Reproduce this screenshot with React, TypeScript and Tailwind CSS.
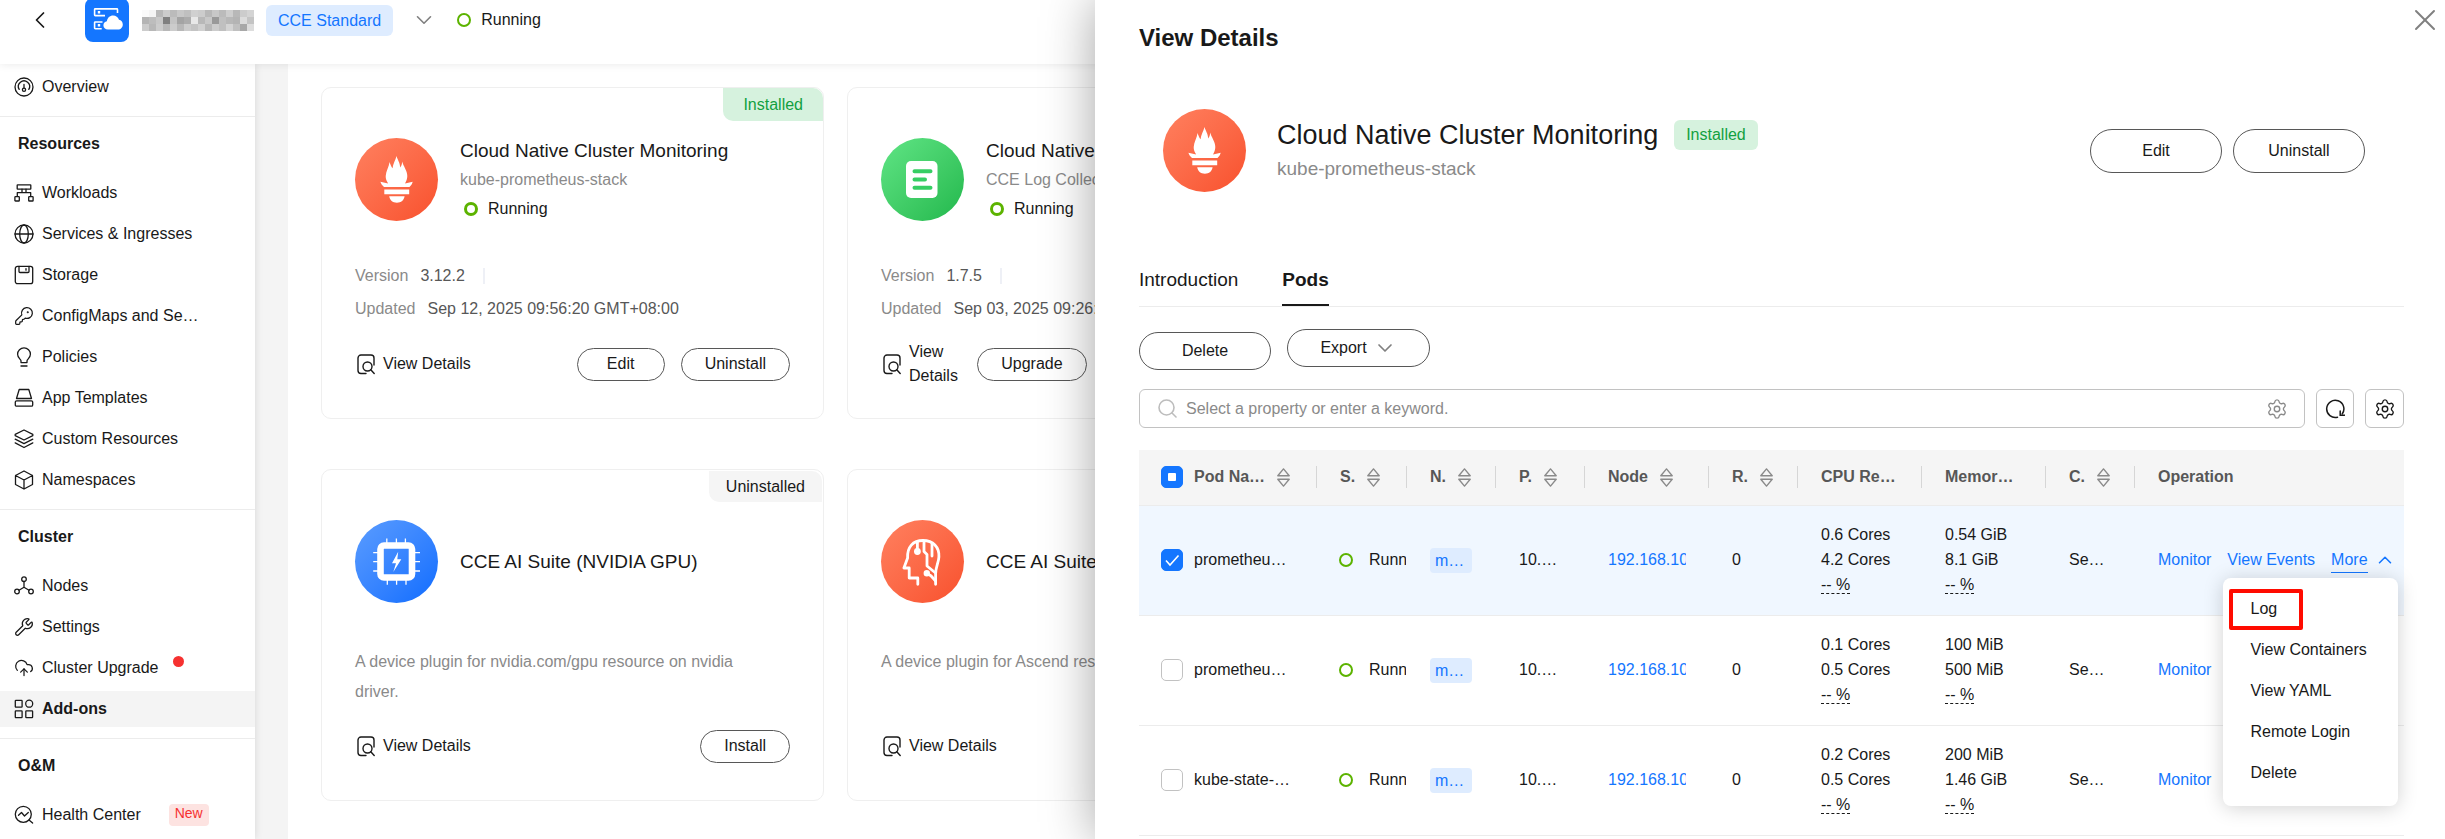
import React, { useState } from "react";
import {
  ChevronDown,
  ChevronLeft,
  ChevronUp,
  CloudUpload,
  KeyRound,
  Settings,
  Wrench,
  X,
} from "lucide-react";

interface Addon {
  name: string;
  subtitle?: string;
  description?: string;
  version?: string;
  updated?: string;
  installed: boolean;
  actions: string[];
  icon: React.ReactNode;
}

interface Pod {
  id: string;
  name: string;
  cpu: string[];
  memory: string[];
}

/* ---------- Sidebar icons ---------- */

const LineIcon: React.FC<{ children: React.ReactNode }> = ({ children }) => (
  <svg
    className="w-5 h-5 flex-shrink-0"
    viewBox="0 0 20 20"
    fill="none"
    stroke="currentColor"
    strokeWidth="1.3"
    strokeLinecap="round"
    strokeLinejoin="round">
    {children}
  </svg>
);

const OverviewIcon = () => (
  <LineIcon>
    <circle cx="10" cy="10" r="9" />
    <path d="M5.2 12.4a5.6 5.6 0 1 1 9.6 0M10 7.5v3.6" />
    <circle cx="10" cy="12.8" r="1.6" />
  </LineIcon>
);

const WorkloadsIcon = () => (
  <LineIcon>
    <rect x="3.2" y="1.8" width="13.6" height="4.4" rx="0.4" />
    <path d="M8 6.200v3.500M12 6.200v3.500M3.300 13.400V9.700h13.400v3.700" />
    <rect x="0.9" y="13.6" width="4.4" height="4.4" rx="0.6" />
    <rect x="14.7" y="13.6" width="4.4" height="4.4" rx="0.6" />
  </LineIcon>
);

const GlobeIcon = () => (
  <LineIcon>
    <circle cx="10" cy="10" r="9" />
    <ellipse cx="10" cy="10" rx="4.3" ry="9" />
    <path d="M1 10h18" />
  </LineIcon>
);

const StorageIcon = () => (
  <LineIcon>
    <rect x="1.3" y="1.3" width="17.4" height="17.4" rx="2.2" />
    <path d="M5 1.5v5a1 1 0 0 0 1 1h8a1 1 0 0 0 1-1v-5M12 3.6v1.6" />
  </LineIcon>
);

const BulbIcon = () => (
  <LineIcon>
    <path d="M7 15.600v-1.800C6.800 12 3.600 11 3.600 7.200a6.400 6.400 0 0 1 12.800 0c0 3.800-3.200 4.800-3.400 6.600v1.800zM7 19h6" />
  </LineIcon>
);

const TemplatesIcon = () => (
  <LineIcon>
    <path d="M5.200 1.500h9.600l2.700 9H2.500z" />
    <rect x="1.3" y="12.8" width="17.4" height="5.4" rx="1.3" />
  </LineIcon>
);

const LayersIcon = () => (
  <LineIcon>
    <path d="M10 1l8.800 4.300v1.400L10 11 1.200 6.700V5.300zM1.200 10.200L10 14.700l8.800-4.500M1.200 13.900L10 18.500l8.800-4.600" />
  </LineIcon>
);

const CubeIcon = () => (
  <LineIcon>
    <path d="M10 1l8.500 4.500v9L10 19l-8.500-4.500v-9zM1.500 5.500L10 10l8.500-4.500M10 10v9" />
  </LineIcon>
);

const NodesIcon = () => (
  <LineIcon>
    <circle cx="10" cy="3.2" r="2.3" />
    <circle cx="3" cy="15.5" r="2.3" />
    <circle cx="17" cy="15.5" r="2.3" />
    <path d="M10 5.500v5.500M5 14.200l5-3 5 3" />
  </LineIcon>
);

const AddonsIcon = () => (
  <LineIcon>
    <rect x="1.3" y="1.3" width="6.8" height="6.8" rx="0.6" />
    <circle cx="15.2" cy="4.7" r="3.5" />
    <rect x="1.3" y="11.8" width="6.8" height="6.8" rx="0.6" />
    <rect x="11.8" y="11.8" width="6.8" height="6.8" rx="0.6" />
  </LineIcon>
);

const HealthIcon = () => (
  <LineIcon>
    <circle cx="9.3" cy="9.3" r="8" />
    <path d="M15 15l3.600 3M4.500 10.300l3-2.800 3 3.500 3.800-3.500" />
  </LineIcon>
);

const DetailsIcon = () => (
  <svg
    className="w-[18px] h-[21px] flex-shrink-0"
    viewBox="0 0 18 21"
    fill="none"
    stroke="currentColor"
    strokeWidth="1.4"
    strokeLinecap="round">
    <path d="M17 11V4a3 3 0 0 0-3-3H4a3 3 0 0 0-3 3v12.500a3 3 0 0 0 3 3h5" />
    <circle cx="10.5" cy="12.5" r="4.5" />
    <path d="M13.800 15.800l3.400 3.700" />
  </svg>
);

const SearchIcon = () => (
  <svg
    className="w-[19px] h-[19px] flex-shrink-0 text-[#bdbdbd]"
    viewBox="0 0 19 19"
    fill="none"
    stroke="currentColor"
    strokeWidth="1.6"
    strokeLinecap="round">
    <circle cx="8.5" cy="8.5" r="7.5" />
    <path d="M14 14l4 4" />
  </svg>
);

const RefreshIcon = () => (
  <svg
    className="w-5 h-5"
    viewBox="0 0 20 20"
    fill="none"
    stroke="currentColor"
    strokeWidth="1.5"
    strokeLinecap="round">
    <path d="M12.500 18.200A8.600 8.600 0 1 1 17.200 15" />
    <path d="M15.200 12v4.200h4.300" />
  </svg>
);

const SortIcon = () => (
  <svg
    className="w-[13px] h-[19px] flex-shrink-0 text-[#8a8a8a]"
    viewBox="0 0 13 19"
    fill="none"
    stroke="currentColor"
    strokeWidth="1.4"
    strokeLinejoin="round">
    <path d="M6.500 0.900l5.700 6.900H0.800zM6.500 18.100l5.700-6.900H0.800z" />
  </svg>
);

/* ---------- Add-on logos ---------- */

const TorchLogo = () => (
  <div className="w-[83px] h-[83px] flex-shrink-0 rounded-full overflow-hidden bg-linear-to-br from-[#ff805f] to-[#f8502c]">
    <svg viewBox="0 0 83 83" fill="#fff">
      <path d="M41.500 18c.8 3.500 3.500 6.500 3.700 11.500 1.200-1.500 1.800-3.500 2.100-6 .8 4.500 5 9 5 14.500 0 3-1 5.200-2.300 7.500l7.700-1.800c-.6 2.200-1.600 3.800-3.200 5.200H29c-1.700-1.400-2.900-3-3.600-5.200l7.800 1.800c-1.500-2.300-2.700-4.500-2.500-7.500.2-5 3.300-9 3.900-14 .7 2.300 1.500 4.500 3 6.300.1-4.300 3.100-8.300 3.900-12.300z" />
      <path d="M29.300 51.500h24.900v4.800H29.300zM34.200 58.300h15.400c-.5 3.800-3.500 6.400-7.700 6.400s-7.200-2.600-7.700-6.400z" />
    </svg>
  </div>
);

const LogLogo = () => (
  <div className="w-[83px] h-[83px] flex-shrink-0 rounded-full overflow-hidden bg-linear-to-br from-[#5fe585] to-[#1fb84c]">
    <svg viewBox="0 0 83 83">
      <rect x="25" y="23" width="31.5" height="37" rx="5" fill="#fff" />
      <path
        d="M33.500 33.200h16M33.500 41.500H44M33.500 49.700h16"
        stroke="#36ce63"
        strokeWidth="4"
        strokeLinecap="round"
      />
    </svg>
  </div>
);

const GpuLogo = () => (
  <div className="w-[83px] h-[83px] flex-shrink-0 rounded-full overflow-hidden bg-linear-to-br from-[#5a9cff] to-[#0a6cff]">
    <svg viewBox="0 0 83 83" fill="none">
      <rect x="25.5" y="25.5" width="31.5" height="32" rx="3.5" stroke="#fff" strokeWidth="6.6" />
      <path
        d="M31.800 18.500v5M41.400 18.500v5M50.400 18.500v5M32.300 60v4.700M41.600 60v4.700M51 60v4.700M18.200 32.700H23M18.200 41.700H23M18.200 51H23M60 32.700h5M60 41.700h5M60 51h5"
        stroke="#fff"
        strokeWidth="1.3"
      />
      <path d="M43.200 31.800L37 43.200h4L38.300 52 46.300 39.300h-4z" fill="#fff" />
    </svg>
  </div>
);

const AscendLogo = () => (
  <div className="w-[83px] h-[83px] flex-shrink-0 rounded-full overflow-hidden bg-linear-to-br from-[#ff805f] to-[#f8502c]">
    <svg
      viewBox="0 0 83 83"
      fill="none"
      stroke="#fff"
      strokeWidth="2.8"
      strokeLinecap="round"
      strokeLinejoin="round">
      <path d="M36.800 64.300V58h-8.600V48h-5.300l3.700-10C26 27 32 20.500 42 20.500S58.500 27 57.900 37c-.3 6-3.300 10-3.300 17v10.300" />
      <path d="M36.400 30V22.500M43 21.500v10l3 3v11.500l8.600 7M51 23.500V36M45.400 53.300l4.500 2.500 4.500 5" />
      <circle cx="36.4" cy="31.5" r="2" fill="#fff" />
      <circle cx="45.8" cy="53.3" r="1.8" fill="#fff" />
    </svg>
  </div>
);

const ProductLogo = () => (
  <div className="w-11 h-11 flex-shrink-0 rounded-lg bg-[#1476ff]">
    <svg viewBox="0 0 44 44" fill="none">
      <path
        d="M32.500 15v-3.500a.6.600 0 0 0-.6-.6H10.200a.6.600 0 0 0-.6.600V17a.6.600 0 0 0 .6.600H20M17.500 24h-7.300a.6.600 0 0 0-.6.600v5.500a.6.600 0 0 0 .6.600h6.500"
        stroke="#fff"
        strokeWidth="1.6"
      />
      <path d="M12.800 14.300h2.400M12.800 27.300h2.400" stroke="#fff" strokeWidth="2.4" />
      <path
        d="M23 31.400c-2.800 0-4.600-1.800-4.600-4.200 0-2.200 1.600-3.700 3.500-3.900.4-3.400 2.900-5.800 6.200-5.800 2.800 0 5 1.600 5.900 4.300 2.200.3 3.800 2.200 3.800 4.600 0 2.900-2 5-4.800 5z"
        fill="#fff"
      />
    </svg>
  </div>
);

/* Obscured cluster name, one grey level per 7px block */
const NAME_BLOCKS = [
  ["#fafafa", "#f4f4f4", "#b8b8b8", "#cccccc", "#bbbbbb", "#c8c8c8", "#c0c0c0", "#d0d0d0", "#cccccc", "#b8b8b8", "#c8c8c8", "#bbbbbb", "#cecece", "#b8b8b8", "#cccccc", "#d4d4d4"],
  ["#b4b4b4", "#bdbdbd", "#c8c8c8", "#808080", "#c4c4c4", "#a4a4a4", "#acacac", "#e8e8e8", "#b8b8b8", "#c8c8c8", "#999999", "#c0c0c0", "#b8b8b8", "#b4b4b4", "#dcdcdc", "#c4c4c4"],
  ["#cccccc", "#b8b8b8", "#cccccc", "#b8b8b8", "#cccccc", "#b8b8b8", "#cccccc", "#c4c4c4", "#d0d0d0", "#b8b8b8", "#cccccc", "#c0c0c0", "#d4d4d4", "#c0c0c0", "#a8a8a8", "#dddddd"],
];

const ObscuredName = () => (
  <svg className="w-28 h-[21px] flex-shrink-0" viewBox="0 0 112 21" shapeRendering="crispEdges">
    {NAME_BLOCKS.map((row, y) =>
      row.map((fill, x) => (
        <rect key={`${x}-${y}`} x={x * 7} y={y * 7} width="7" height="7" fill={fill} />
      ))
    )}
  </svg>
);

/* ---------- Data ---------- */

const menuSections = [
  {
    title: "Resources",
    items: [
      { label: "Workloads", icon: <WorkloadsIcon /> },
      { label: "Services & Ingresses", icon: <GlobeIcon /> },
      { label: "Storage", icon: <StorageIcon /> },
      { label: "ConfigMaps and Se…", icon: <KeyRound size={20} strokeWidth={1.5} /> },
      { label: "Policies", icon: <BulbIcon /> },
      { label: "App Templates", icon: <TemplatesIcon /> },
      { label: "Custom Resources", icon: <LayersIcon /> },
      { label: "Namespaces", icon: <CubeIcon /> },
    ],
  },
  {
    title: "Cluster",
    items: [
      { label: "Nodes", icon: <NodesIcon /> },
      { label: "Settings", icon: <Wrench size={20} strokeWidth={1.5} /> },
      { label: "Cluster Upgrade", icon: <CloudUpload size={20} strokeWidth={1.5} />, dot: true },
      { label: "Add-ons", icon: <AddonsIcon />, active: true },
    ],
  },
  {
    title: "O&M",
    items: [{ label: "Health Center", icon: <HealthIcon />, tag: "New" }],
  },
];

const addons: Addon[][] = [
  [
    {
      name: "Cloud Native Cluster Monitoring",
      subtitle: "kube-prometheus-stack",
      version: "3.12.2",
      updated: "Sep 12, 2025 09:56:20 GMT+08:00",
      installed: true,
      actions: ["Edit", "Uninstall"],
      icon: <TorchLogo />,
    },
    {
      name: "Cloud Native Log Collection",
      subtitle: "CCE Log Collector",
      version: "1.7.5",
      updated: "Sep 03, 2025 09:26:20 GMT+08:00",
      installed: true,
      actions: ["Upgrade", "Edit", "Uninstall"],
      icon: <LogLogo />,
    },
  ],
  [
    {
      name: "CCE AI Suite (NVIDIA GPU)",
      description: "A device plugin for nvidia.com/gpu resource on nvidia driver.",
      installed: false,
      actions: ["Install"],
      icon: <GpuLogo />,
    },
    {
      name: "CCE AI Suite (Ascend NPU)",
      description: "A device plugin for Ascend resource",
      installed: false,
      actions: ["Install"],
      icon: <AscendLogo />,
    },
  ],
];

const pods: Pod[] = [
  { id: "pod-1", name: "prometheu…", cpu: ["0.6 Cores", "4.2 Cores"], memory: ["0.54 GiB", "8.1 GiB"] },
  { id: "pod-2", name: "prometheu…", cpu: ["0.1 Cores", "0.5 Cores"], memory: ["100 MiB", "500 MiB"] },
  { id: "pod-3", name: "kube-state-…", cpu: ["0.2 Cores", "0.5 Cores"], memory: ["200 MiB", "1.46 GiB"] },
];

const columns = [
  { label: "S.", sortable: true },
  { label: "N.", sortable: true },
  { label: "P.", sortable: true },
  { label: "Node", sortable: true },
  { label: "R.", sortable: true },
  { label: "CPU Re…", sortable: false },
  { label: "Memor…", sortable: false },
  { label: "C.", sortable: true },
  { label: "Operation", sortable: false },
];

/* ---------- Page pieces ---------- */

const TopBar = () => (
  <header className="relative z-10 h-16 flex-shrink-0 bg-white shadow-[0_1px_8px_rgba(0,0,0,0.08)]">
    <div className="flex items-center h-10 pl-[26px]">
      <button aria-label="Back" className="mr-[31px]">
        <ChevronLeft size={28} strokeWidth={1.5} />
      </button>
      <ProductLogo />
      <div className="flex items-center gap-3 ml-[13px]">
        <ObscuredName />
        <span className="h-[31px] px-3 leading-[31px] rounded-md bg-[#deecff] text-[#1476ff]">
          CCE Standard
        </span>
      </div>
      <button aria-label="Switch cluster" className="ml-[18px] text-[#808080]">
        <ChevronDown size={26} strokeWidth={1.5} />
      </button>
      <span className="w-3.5 h-3.5 ml-5 mr-2.5 rounded-full border-2 border-[#5cb300]" />
      <span>Running</span>
    </div>
  </header>
);

const MenuItem: React.FC<{
  label: string;
  icon: React.ReactNode;
  active?: boolean;
  dot?: boolean;
  tag?: string;
}> = ({ label, icon, active, dot, tag }) => (
  <a
    href="#"
    className={`flex items-center gap-2 h-9 pl-3.5 whitespace-nowrap ${
      active ? "bg-[#f4f4f4] font-bold" : ""
    }`}>
    {icon}
    <span>{label}</span>
    {dot && <span className="w-[11px] h-[11px] ml-1.5 mb-[14px] rounded-full bg-[#f63130]" />}
    {tag && (
      <span className="h-[22px] ml-5 px-1.5 rounded-sm bg-[#fde3e1] text-sm leading-[18px] text-[#f63130]">
        {tag}
      </span>
    )}
  </a>
);

const Sidebar = () => (
  <nav className="w-[255px] flex-shrink-0 bg-white shadow-[0_0_8px_rgba(0,0,0,0.12)]">
    <div className="pt-[5px] pb-[11px]">
      <MenuItem label="Overview" icon={<OverviewIcon />} />
    </div>
    {menuSections.map((section) => (
      <section key={section.title} className="border-t border-[#ececec] pt-[9px] pb-[11px]">
        <h3 className="h-9 pl-[18px] leading-9 font-bold">{section.title}</h3>
        <div className="flex flex-col gap-[5px] mt-[13px]">
          {section.items.map((item) => (
            <MenuItem key={item.label} {...item} />
          ))}
        </div>
      </section>
    ))}
  </nav>
);

const AddonCard: React.FC<{ addon: Addon }> = ({ addon }) => (
  <article className="relative pt-12 px-[33px] pb-[30px] rounded-[10px] border border-[#efefef] bg-white">
    {addon.installed ? (
      <span className="absolute top-0 right-0 h-[33px] px-5 leading-[33px] rounded-tr-[10px] rounded-bl-[10px] bg-[#d6f2de] text-[#12a03f]">
        Installed
      </span>
    ) : (
      <span className="absolute top-px right-px h-[31px] px-[17px] leading-[31px] rounded-tr-[10px] rounded-bl-[10px] bg-[#f5f5f5]">
        Uninstalled
      </span>
    )}

    <div className="flex items-center gap-[22px] h-[87px]">
      {addon.icon}
      <div className="leading-[29px] whitespace-nowrap">
        <h2 className="text-[19px] leading-[29px]">{addon.name}</h2>
        {addon.subtitle && (
          <>
            <p className="text-[#8a8a8a]">{addon.subtitle}</p>
            <p className="flex items-center gap-2.5 pl-1">
              <span className="w-3.5 h-3.5 rounded-full border-3 border-[#5cb300]" />
              Running
            </p>
          </>
        )}
      </div>
    </div>

    {addon.description ? (
      <p className="min-h-[117px] pt-[42px] pr-5 leading-[30px] text-[#8a8a8a]">
        {addon.description}
      </p>
    ) : (
      <dl className="min-h-[117px] pt-9 leading-[33px] text-[#575757] whitespace-nowrap">
        <div className="flex items-center gap-3">
          <dt className="text-[#8a8a8a]">Version</dt>
          <dd>{addon.version}</dd>
          <span className="w-0.5 h-4 ml-1.5 bg-[#eef0f6]" />
        </div>
        <div className="flex gap-3">
          <dt className="text-[#8a8a8a]">Updated</dt>
          <dd>{addon.updated}</dd>
        </div>
      </dl>
    )}

    <div className="flex items-center justify-between gap-4 h-12">
      <a href="#" className="flex items-center gap-2 pl-0.5 leading-6">
        <DetailsIcon />
        <span>View Details</span>
      </a>
      <div className="flex gap-4">
        {addon.actions.map((action) => (
          <button
            key={action}
            className="h-[33px] min-w-[88px] px-[23px] rounded-full border border-[#575757]">
            {action}
          </button>
        ))}
      </div>
    </div>
  </article>
);

const Checkbox: React.FC<{
  label: string;
  checked: boolean;
  partial?: boolean;
  onChange: () => void;
}> = ({ label, checked, partial, onChange }) => (
  <label className="relative block w-[22px] h-[22px]">
    <input
      type="checkbox"
      aria-label={label}
      checked={checked}
      onChange={onChange}
      className="block w-[22px] h-[22px] appearance-none rounded-[5px] border border-[#c2c2c2] bg-white checked:border-[#1476ff] checked:bg-[#1476ff]"
    />
    {checked && (
      <svg
        className="absolute inset-0 w-[22px] h-[22px] pointer-events-none"
        viewBox="0 0 22 22"
        fill="none">
        {partial ? (
          <rect x="7" y="7" width="8" height="8" rx="1" fill="#fff" />
        ) : (
          <path d="M5 11.500l4 4.500 8.500-9.500" stroke="#fff" strokeWidth="1.6" />
        )}
      </svg>
    )}
  </label>
);

const Usage: React.FC<{ lines: string[] }> = ({ lines }) => (
  <div className="flex flex-col items-start pb-1 leading-[25px]">
    {lines.map((line) => (
      <span key={line}>{line}</span>
    ))}
    <span className="h-[22px] border-b border-dashed border-[#191919]">-- %</span>
  </div>
);

const MoreMenu = () => (
  <ul className="absolute top-[30px] -right-0.5 z-20 w-[175px] pt-[11px] pb-3 rounded-lg bg-white shadow-[0_2px_20px_rgba(0,0,0,0.18)] text-[#191919]">
    {["Log", "View Containers", "View YAML", "Remote Login", "Delete"].map((item) => (
      <li key={item} className="relative h-[41px]">
        {item === "Log" && (
          <span className="absolute inset-y-0 left-1.5 w-[74px] rounded-xs border-4 border-[#ff0b00] pointer-events-none" />
        )}
        <button className="w-full h-full pl-7 text-left">{item}</button>
      </li>
    ))}
  </ul>
);

const PodTable = () => {
  const [selected, setSelected] = useState<string[]>(["pod-1"]);
  const [openMenu, setOpenMenu] = useState<string | null>("pod-1");

  const toggle = (id: string) => {
    setSelected((prev) => (prev.includes(id) ? prev.filter((p) => p !== id) : [...prev, id]));
  };

  const toggleAll = () => {
    setSelected((prev) => (prev.length > 0 ? [] : pods.map((pod) => pod.id)));
  };

  return (
    <table className="w-full mt-[22px] table-fixed text-left whitespace-nowrap">
      <colgroup>
        <col className="w-[55px]" />
        <col className="w-[122px]" />
        <col className="w-[90px]" />
        <col className="w-[89px]" />
        <col className="w-[89px]" />
        <col className="w-[124px]" />
        <col className="w-[89px]" />
        <col className="w-[124px]" />
        <col className="w-[124px]" />
        <col className="w-[89px]" />
        <col />
      </colgroup>
      <thead>
        <tr className="h-[55px] border-b border-[#ececec] bg-[#f5f5f5] text-[#575757]">
          <th className="pl-[22px]">
            <Checkbox
              label="Select all pods"
              checked={selected.length > 0}
              partial={selected.length < pods.length}
              onChange={toggleAll}
            />
          </th>
          <th>
            <div className="flex items-center gap-3">
              Pod Na…
              <SortIcon />
            </div>
          </th>
          {columns.map((column) => (
            <th key={column.label}>
              <div className="flex items-center gap-3 h-[22px] pl-[23px] border-l border-[#d6d6d6]">
                {column.label}
                {column.sortable && <SortIcon />}
              </div>
            </th>
          ))}
        </tr>
      </thead>
      <tbody>
        {pods.map((pod) => (
          <tr
            key={pod.id}
            className={`h-[110px] border-b border-[#ececec] ${
              selected.includes(pod.id) ? "bg-[#f0f7ff]" : ""
            }`}>
            <td className="pl-[22px]">
              <Checkbox
                label={pod.name}
                checked={selected.includes(pod.id)}
                onChange={() => toggle(pod.id)}
              />
            </td>
            <td>{pod.name}</td>
            <td className="pl-[23px]">
              <div className="flex items-center gap-4 overflow-hidden">
                <span className="w-3.5 h-3.5 flex-shrink-0 rounded-full border-2 border-[#5cb300]" />
                Running
              </div>
            </td>
            <td className="pl-6">
              <span className="block w-[42px] h-[25px] pl-[5px] leading-[25px] rounded-sm bg-[#deecff] text-[#1476ff]">
                m…
              </span>
            </td>
            <td className="pl-6">10.…</td>
            <td className="pl-6 pr-[22px]">
              <a href="#" className="block overflow-hidden text-[#1476ff]">
                192.168.10
              </a>
            </td>
            <td className="pl-6">0</td>
            <td className="pl-6">
              <Usage lines={pod.cpu} />
            </td>
            <td className="pl-6">
              <Usage lines={pod.memory} />
            </td>
            <td className="pl-6">Se…</td>
            <td className="pl-6">
              <div className="flex items-center gap-4 text-[#1476ff]">
                <a href="#">Monitor</a>
                {openMenu === pod.id && (
                  <>
                    <a href="#">View Events</a>
                    <div className="relative">
                      <button
                        onClick={() => setOpenMenu(null)}
                        className="flex items-center gap-1.5">
                        <span className="border-b border-[#1476ff]">More</span>
                        <ChevronUp size={22} strokeWidth={1.7} />
                      </button>
                      <MoreMenu />
                    </div>
                  </>
                )}
              </div>
            </td>
          </tr>
        ))}
      </tbody>
    </table>
  );
};

const DetailsDrawer = () => (
  <aside className="absolute inset-y-0 right-0 z-20 w-[1350px] max-w-full pl-11 pr-[41px] pt-5 bg-white shadow-[0_0_48px_rgba(0,0,0,0.36)]">
    <button aria-label="Close" className="absolute top-0.5 right-0.5 text-[#808080]">
      <X size={36} strokeWidth={1.3} />
    </button>
    <h1 className="text-2xl leading-9 font-bold">View Details</h1>

    <div className="flex items-center mt-[53px] pl-6 pr-[39px]">
      <TorchLogo />
      <div className="flex-1 ml-[31px]">
        <div className="flex items-center gap-4">
          <h2 className="text-[27px] leading-9">Cloud Native Cluster Monitoring</h2>
          <span className="h-[30px] px-3 leading-[30px] rounded-md bg-[#d6f2de] text-[#12a03f]">
            Installed
          </span>
        </div>
        <p className="text-[19px] leading-8 text-[#8a8a8a]">kube-prometheus-stack</p>
      </div>
      <div className="flex gap-[11px]">
        <button className="w-[132px] h-11 rounded-full border border-[#575757]">Edit</button>
        <button className="w-[132px] h-11 rounded-full border border-[#575757]">Uninstall</button>
      </div>
    </div>

    <div className="flex gap-11 mt-[74px] border-b border-[#ececec] text-[19px] leading-7">
      <button className="pb-3">Introduction</button>
      <button className="pb-2.5 border-b-2 border-[#191919] font-bold">Pods</button>
    </div>

    <div className="flex gap-4 h-[41px] mt-[22px]">
      <button className="self-end w-[132px] h-[38px] rounded-full border border-[#575757]">
        Delete
      </button>
      <button className="flex items-center justify-center gap-1.5 w-[143px] h-[38px] rounded-full border border-[#575757]">
        Export
        <ChevronDown size={24} strokeWidth={1.7} className="text-[#808080]" />
      </button>
    </div>

    <div className="flex gap-[11px] mt-[19px]">
      <div className="flex flex-1 items-center gap-[9px] h-[39px] pl-[18px] pr-4 rounded-md border border-[#c2c2c2]">
        <SearchIcon />
        <input
          type="text"
          aria-label="Search pods"
          placeholder="Select a property or enter a keyword."
          className="flex-1 outline-none placeholder:text-[#8a8a8a]"
        />
        <button aria-label="Search settings" className="text-[#8a8a8a]">
          <Settings size={22} strokeWidth={1.5} />
        </button>
      </div>
      <button
        aria-label="Refresh"
        className="flex items-center justify-center w-[38px] h-[39px] rounded-md border border-[#c2c2c2]">
        <RefreshIcon />
      </button>
      <button
        aria-label="Table settings"
        className="flex items-center justify-center w-[39px] h-[39px] rounded-md border border-[#c2c2c2]">
        <Settings size={22} strokeWidth={1.5} />
      </button>
    </div>

    <PodTable />
  </aside>
);

export default function App() {
  return (
    <div className="relative flex flex-col h-screen overflow-hidden bg-[#f4f4f4] font-['Liberation_Sans',Arial,sans-serif] text-base text-[#191919]">
      <TopBar />
      <div className="flex flex-1 min-h-0">
        <Sidebar />
        <main className="flex-1 flex flex-col gap-[50px] ml-[33px] pt-[23px] pl-[33px] pr-[43px] bg-white">
          {addons.map((row, index) => (
            <div key={index} className="grid grid-cols-4 gap-[23px]">
              {row.map((addon) => (
                <AddonCard key={addon.name} addon={addon} />
              ))}
            </div>
          ))}
        </main>
      </div>
      <DetailsDrawer />
    </div>
  );
}
